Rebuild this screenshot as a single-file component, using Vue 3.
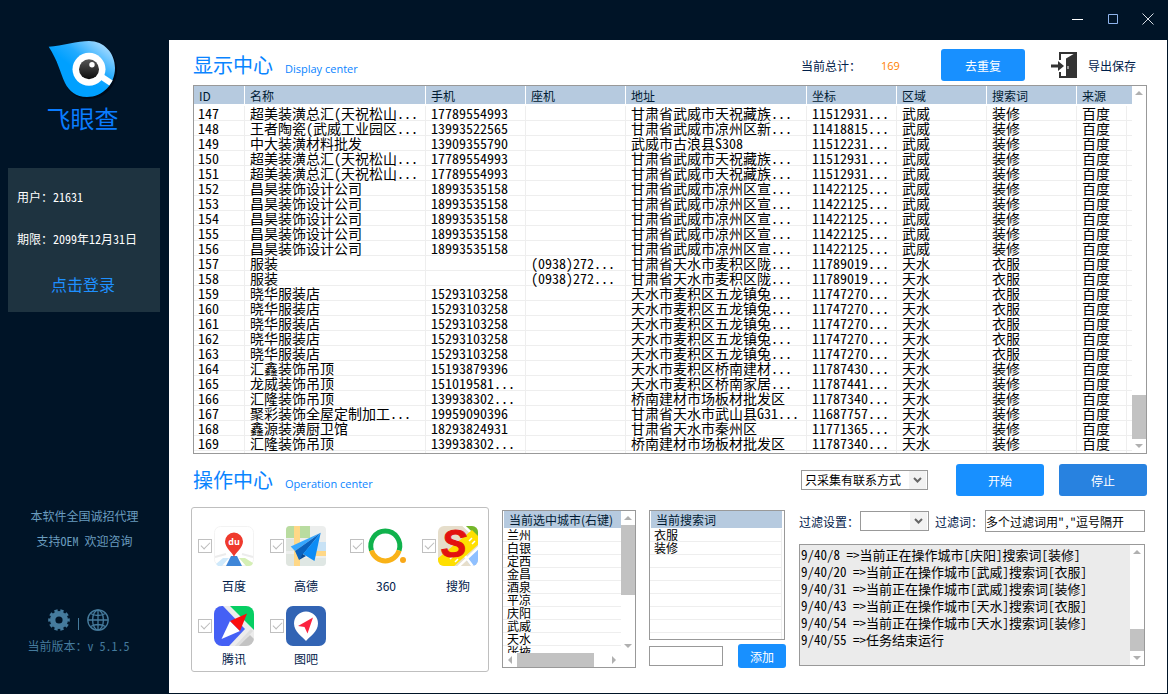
<template>
  <div class="app">
    <aside class="sidebar">
      <div class="brand">
        <svg class="brand-logo" viewBox="0 0 70 60" aria-hidden="true">
          <defs>
            <linearGradient id="drop" x1="0.45" y1="0.55" x2="0.9" y2="0.05">
              <stop offset="0" stop-color="#00a0ff" />
              <stop offset="0.35" stop-color="#22abff" />
              <stop offset="1" stop-color="#b5e0ff" />
            </linearGradient>
            <linearGradient id="pupil" x1="0" y1="0" x2="0" y2="1">
              <stop offset="0" stop-color="#555" />
              <stop offset="1" stop-color="#0c0c0c" />
            </linearGradient>
          </defs>
          <path d="M2 8C15 7 31 2 42 2C57 2 69 14 69 29C69 45 57 58 40 58C29 58 22 52 18 44C13 33 11 22 2 8Z" fill="#000a18" />
          <path d="M.7 5.7C14 5 30 0 41 0C56 0 67 12 67 27C67 43 55 56 39 56C28 56 21 50 17 42C12 31 10 20 .7 5.7Z" fill="url(#drop)" />
          <path d="M51 34L63 42" stroke="#fff" stroke-width="6" />
          <circle cx="41" cy="28.300" r="16.500" fill="#fff" />
          <circle cx="41" cy="28.300" r="10" fill="url(#pupil)" />
          <circle cx="44" cy="23.700" r="2.700" fill="#fff" />
        </svg>
        <h1>飞眼查</h1>
      </div>

      <div class="user-panel">
        <p>用户：{{ user.id }}</p>
        <p>期限：{{ user.expires }}</p>
        <button type="button" class="login">点击登录</button>
      </div>

      <div class="sidebar-foot">
        <p class="notice">本软件全国诚招代理</p>
        <p class="notice">支持OEM 欢迎咨询</p>
        <div class="foot-icons">
          <button type="button" aria-label="设置">
            <svg width="22" height="22" viewBox="0 0 22 22">
              <circle cx="11" cy="11" r="6.300" fill="none" stroke="#457b9d" stroke-width="5.400" />
              <circle cx="11" cy="11" r="9.500" fill="none" stroke="#457b9d" stroke-width="2.600" pathLength="20" stroke-dasharray="1.1 0.9" stroke-dashoffset="0.55" />
            </svg>
          </button>
          <span class="divider"></span>
          <button type="button" aria-label="官网">
            <svg width="22" height="22" viewBox="0 0 22 22" fill="none" stroke="#457b9d" stroke-width="1.300">
              <circle cx="11" cy="11" r="10.200" />
              <ellipse cx="11" cy="11" rx="5.400" ry="10" />
              <path d="M11 1V21M1 11H21M3.500 4.500Q11 8.500 18.500 4.500M3.500 17.500Q11 13.500 18.500 17.500" />
            </svg>
          </button>
        </div>
        <p class="version">当前版本：v 5.1.5</p>
      </div>
    </aside>

    <div class="titlebar">
      <button type="button" aria-label="最小化">
        <svg width="12" height="12" viewBox="0 0 12 12"><path d="M0 6.500H11" stroke="#fff" /></svg>
      </button>
      <button type="button" aria-label="最大化">
        <svg width="12" height="12" viewBox="0 0 12 12"><path d="M1.500 1.500H10.500V10.500H1.500Z" fill="none" stroke="#8fb4ec" /></svg>
      </button>
      <button type="button" aria-label="关闭">
        <svg width="12" height="12" viewBox="0 0 12 12"><path d="M.5 .5L11.500 11.500M11.500 .5L.5 11.500" stroke="#d5dbe2" /></svg>
      </button>
    </div>

    <main class="main">
      <section>
        <header class="section-head">
          <h2>显示中心</h2>
          <span class="subtitle">Display center</span>
          <div class="head-tools">
            <span class="total-label">当前总计：</span>
            <span class="total">{{ total }}</span>
            <button type="button" class="btn btn-dedupe">去重复</button>
            <button type="button" class="export">
              <svg width="26" height="26" viewBox="0 0 26 26" aria-hidden="true">
                <path d="M9 8V1H25V25H9V20" fill="none" stroke="#333" stroke-width="2" />
                <path d="M15 6.500L26 0V26H15Z" fill="#333" />
                <path d="M0 14H10" stroke="#333" stroke-width="3" />
                <path d="M7 9L13 14L7 19Z" fill="#333" />
                <path d="M17 14V17" stroke="#fff" />
              </svg>
              导出保存
            </button>
          </div>
        </header>

        <div class="data-box">
          <table class="data-table">
            <colgroup>
              <col class="c-id" /><col class="c-name" /><col class="c-tel" /><col class="c-tel" /><col class="c-name" />
              <col class="c-mid" /><col class="c-mid" /><col class="c-mid" /><col class="c-src" /><col class="c-end" />
            </colgroup>
            <thead>
              <tr>
                <th v-for="(h, i) in headers" :key="h" :colspan="i === 8 ? 2 : 1">{{ h }}</th>
              </tr>
            </thead>
            <tbody>
              <tr v-for="r in rows" :key="r[0]">
                <td v-for="(cell, i) in r" :key="i">{{ cell }}</td>
                <td></td>
              </tr>
              <tr class="tail"><td v-for="n in 10" :key="n"></td></tr>
            </tbody>
          </table>
          <div class="scroll">
            <span class="arrow up"></span>
            <div class="track end"><div class="thumb thumb-data"></div></div>
            <span class="arrow down"></span>
          </div>
        </div>
      </section>

      <section>
        <header class="section-head ops-head">
          <h2>操作中心</h2>
          <span class="subtitle">Operation center</span>
          <div class="run-tools">
            <div class="select-box mode">
              <select v-model="mode" aria-label="采集方式">
                <option>只采集有联系方式</option>
                <option>采集全部</option>
              </select>
              <svg class="chevron" viewBox="0 0 17 18"><path d="M5 7L8.500 10.500L12 7" /></svg>
            </div>
            <button type="button" class="btn btn-run">开始</button>
            <button type="button" class="btn btn-run btn-stop">停止</button>
          </div>
        </header>

        <div class="ops">
          <div class="sources">
            <label class="source">
              <input v-model="sources" type="checkbox" value="百度" />
              <svg viewBox="0 0 40 40" aria-hidden="true">
                <rect x="0.500" y="0.500" width="39" height="39" rx="6" fill="#fff" stroke="#f3f3f3" />
                <path d="M2 38L9 32H15L8 40H4Z" fill="#cfe9fb" />
                <path d="M25 32H31L39 37Q38 40 35 40H32Z" fill="#d5efb5" />
                <path d="M1 31L12 28M28 28L39 31" stroke="#ececec" stroke-width="2" />
                <path d="M12 40L17 30H23L28 40Z" fill="#3f86d8" />
                <path d="M20 31C19 27 11 22 11 15.500A9 9 0 0 1 29 15.500C29 22 21 27 20 31Z" fill="#ef3a2d" />
                <text x="20" y="19" text-anchor="middle" class="mark-du">du</text>
              </svg>
              <span>百度</span>
            </label>
            <label class="source">
              <input v-model="sources" type="checkbox" value="高德" />
              <svg viewBox="0 0 40 40" aria-hidden="true">
                <rect width="40" height="40" rx="4" fill="#eceeed" />
                <path d="M4 0H8V12H0V4Q0 0 4 0ZM16 0H24V12H14V0Z" fill="#b9dca0" />
                <path d="M8 0H14V40H8Z" fill="#ffd887" />
                <path d="M0 13H8V25H0ZM0 28H8V40H4Q0 40 0 36Z" fill="#dfe5df" />
                <path d="M27 25H40V30H27Z" fill="#ffd887" />
                <path d="M33 16H40V25H30Z" fill="#c8e2f5" />
                <path d="M14 32H40V36Q40 40 36 40H14Z" fill="#dfe7e4" />
                <path d="M34.700 6.700L4.700 20.500L9 25Z" fill="#36a7ff" />
                <path d="M34.700 6.700L9 25L13 34L17 28.500Z" fill="#0b62bd" />
                <path d="M34.700 6.700L17 28L28.500 35Z" fill="#0d8cf5" />
                <path d="M13 34L16.500 28L20 30Z" fill="#084a94" />
              </svg>
              <span>高德</span>
            </label>
            <label class="source">
              <input v-model="sources" type="checkbox" value="360" />
              <svg viewBox="0 0 40 40" aria-hidden="true">
                <path d="M5.500 24.500A14.500 15 0 1 1 33.100 24.500" fill="none" stroke="#10b24c" stroke-width="5" />
                <path d="M5.500 24.500A14.500 15 0 0 0 33.100 24.500" fill="none" stroke="#f9b218" stroke-width="5" />
                <circle cx="37" cy="34" r="3" fill="#f9a818" />
              </svg>
              <span>360</span>
            </label>
            <label class="source">
              <input v-model="sources" type="checkbox" value="搜狗" />
              <svg viewBox="0 0 40 40" aria-hidden="true">
                <defs><clipPath id="sg"><rect width="40" height="40" rx="6" /></clipPath></defs>
                <g clip-path="url(#sg)">
                  <rect width="40" height="40" fill="#e6decb" />
                  <path d="M26 0H40V15Z" fill="#74b72a" />
                  <path d="M40 23V40H33L27 32Z" fill="#8fc0ff" />
                  <path d="M24 -2L42 15M24 26L36 42M42 20L20 41" stroke="#fff" stroke-width="2.500" />
                  <path d="M-2 34L34 4L42 12V17L14 42H-2Z" fill="#ffdf00" />
                  <path d="M31 15L34 12M34 18L37 15M17 36L20 33M12 33L15 30" stroke="#fff" stroke-width="1.500" />
                </g>
                <text x="16" y="31" text-anchor="middle" class="mark-s">S</text>
              </svg>
              <span>搜狗</span>
            </label>
            <label class="source low">
              <input v-model="sources" type="checkbox" value="腾讯" />
              <svg viewBox="0 0 40 40" aria-hidden="true">
                <defs><clipPath id="tx"><rect width="40" height="40" rx="8" /></clipPath></defs>
                <g clip-path="url(#tx)">
                  <rect width="40" height="40" fill="#ececec" />
                  <path d="M0 0H9L31 23L15 40H0Z" fill="#4560f5" />
                  <path d="M16 0H40V24Z" fill="#06cf63" />
                  <path d="M36 29L40 33V40H24Z" fill="#c3c3c3" />
                  <path d="M38 24L21 42" stroke="#dedede" stroke-width="3" />
                </g>
                <path d="M16 15L7.500 33L26 25Z" fill="#fff" />
                <path d="M33 7.500L16 15L26 25Z" fill="#fb0d0d" />
              </svg>
              <span>腾讯</span>
            </label>
            <label class="source low">
              <input v-model="sources" type="checkbox" value="图吧" />
              <svg viewBox="0 0 40 40" aria-hidden="true">
                <rect width="40" height="40" rx="7" fill="#3264b4" />
                <path d="M20 35C17 31 8 26 8 17.500A12 12 0 0 1 32 17.500C32 26 23 31 20 35Z" fill="#fff" />
                <path d="M27 11.500L12 20L18.500 21L21.500 27.500Z" fill="#fb2340" />
              </svg>
              <span>图吧</span>
            </label>
          </div>

          <div class="list-box cities">
            <div class="list-main">
              <table class="list">
                <thead><tr><th>当前选中城市(右键)</th></tr></thead>
                <tbody><tr v-for="c in cities" :key="c"><td>{{ c }}</td></tr></tbody>
              </table>
              <div class="scroll">
                <span class="arrow up"></span>
                <div class="track"><div class="thumb thumb-city"></div></div>
                <span class="arrow down"></span>
              </div>
            </div>
            <div class="scroll-x">
              <span class="arrow left"></span>
              <div class="track-x"><div class="thumb-x"></div></div>
              <span class="arrow right"></span>
            </div>
          </div>

          <div class="words">
            <div class="list-box word-box">
              <table class="list word-list">
                <thead><tr><th>当前搜索词</th></tr></thead>
                <tbody><tr v-for="(w, i) in wordRows" :key="i"><td>{{ w }}</td></tr></tbody>
              </table>
            </div>
            <form class="add-row" @submit.prevent="addWord">
              <input v-model.trim="newWord" type="text" aria-label="搜索词" />
              <button type="submit" class="btn">添加</button>
            </form>
          </div>

          <div class="filter">
            <div class="filter-row">
              <label for="filterMode">过滤设置：</label>
              <div class="select-box filter-mode">
                <select id="filterMode" v-model="filterMode">
                  <option value=""></option>
                  <option>包含</option>
                  <option>不包含</option>
                </select>
                <svg class="chevron" viewBox="0 0 17 18"><path d="M5 7L8.500 10.500L12 7" /></svg>
              </div>
              <label for="filterWords">过滤词：</label>
              <input id="filterWords" v-model="filterWords" type="text" />
            </div>
            <div class="log-box">
              <textarea :value="log.join('\n')" readonly aria-label="运行日志"></textarea>
              <div class="scroll">
                <span class="arrow up"></span>
                <div class="track end"><div class="thumb thumb-log"></div></div>
                <span class="arrow down"></span>
              </div>
            </div>
          </div>
        </div>
      </section>
    </main>
  </div>
</template>

<script setup>
import { ref, computed } from 'vue'

const user = { id: '21631', expires: '2099年12月31日' }
const total = ref(169)

const headers = ['ID', '名称', '手机', '座机', '地址', '坐标', '区域', '搜索词', '来源']

const LZ = '甘肃省武威市凉州区宣...'
const TZ = '甘肃省武威市天祝藏族...'
const WL = '天水市麦积区五龙镇兔...'

const rows = ref([
  ['147', '超美装潢总汇(天祝松山...', '17789554993', '', TZ, '11512931...', '武威', '装修', '百度'],
  ['148', '王者陶瓷(武威工业园区...', '13993522565', '', '甘肃省武威市凉州区新...', '11418815...', '武威', '装修', '百度'],
  ['149', '中大装潢材料批发', '13909355790', '', '武威市古浪县S308', '11512231...', '武威', '装修', '百度'],
  ['150', '超美装潢总汇(天祝松山...', '17789554993', '', TZ, '11512931...', '武威', '装修', '百度'],
  ['151', '超美装潢总汇(天祝松山...', '17789554993', '', TZ, '11512931...', '武威', '装修', '百度'],
  ['152', '昌昊装饰设计公司', '18993535158', '', LZ, '11422125...', '武威', '装修', '百度'],
  ['153', '昌昊装饰设计公司', '18993535158', '', LZ, '11422125...', '武威', '装修', '百度'],
  ['154', '昌昊装饰设计公司', '18993535158', '', LZ, '11422125...', '武威', '装修', '百度'],
  ['155', '昌昊装饰设计公司', '18993535158', '', LZ, '11422125...', '武威', '装修', '百度'],
  ['156', '昌昊装饰设计公司', '18993535158', '', LZ, '11422125...', '武威', '装修', '百度'],
  ['157', '服装', '', '(0938)272...', '甘肃省天水市麦积区陇...', '11789019...', '天水', '衣服', '百度'],
  ['158', '服装', '', '(0938)272...', '甘肃省天水市麦积区陇...', '11789019...', '天水', '衣服', '百度'],
  ['159', '晓华服装店', '15293103258', '', WL, '11747270...', '天水', '衣服', '百度'],
  ['160', '晓华服装店', '15293103258', '', WL, '11747270...', '天水', '衣服', '百度'],
  ['161', '晓华服装店', '15293103258', '', WL, '11747270...', '天水', '衣服', '百度'],
  ['162', '晓华服装店', '15293103258', '', WL, '11747270...', '天水', '衣服', '百度'],
  ['163', '晓华服装店', '15293103258', '', WL, '11747270...', '天水', '衣服', '百度'],
  ['164', '汇鑫装饰吊顶', '15193879396', '', '天水市麦积区桥南建材...', '11787430...', '天水', '装修', '百度'],
  ['165', '龙威装饰吊顶', '151019581...', '', '天水市麦积区桥南家居...', '11787441...', '天水', '装修', '百度'],
  ['166', '汇隆装饰吊顶', '139938302...', '', '桥南建材市场板材批发区', '11787340...', '天水', '装修', '百度'],
  ['167', '聚彩装饰全屋定制加工...', '19959090396', '', '甘肃省天水市武山县G31...', '11687757...', '天水', '装修', '百度'],
  ['168', '鑫源装潢厨卫馆', '18293824931', '', '甘肃省天水市秦州区', '11771365...', '天水', '装修', '百度'],
  ['169', '汇隆装饰吊顶', '139938302...', '', '桥南建材市场板材批发区', '11787340...', '天水', '装修', '百度'],
])

const mode = ref('只采集有联系方式')
const sources = ref(['百度', '高德', '360', '搜狗', '腾讯', '图吧'])
const cities = ['兰州', '白银', '定西', '金昌', '酒泉', '平凉', '庆阳', '武威', '天水', '张掖']

const words = ref(['衣服', '装修'])
const newWord = ref('')
// pad with empty rows so the grid lines fill the box
const wordRows = computed(() => [...words.value, ...Array(Math.max(0, 9 - words.value.length)).fill('')])

const filterMode = ref('')
const filterWords = ref('多个过滤词用","逗号隔开')

const log = ref([
  '9/40/8 =>当前正在操作城市[庆阳]搜索词[装修]',
  '9/40/20 =>当前正在操作城市[武威]搜索词[衣服]',
  '9/40/31 =>当前正在操作城市[武威]搜索词[装修]',
  '9/40/43 =>当前正在操作城市[天水]搜索词[衣服]',
  '9/40/54 =>当前正在操作城市[天水]搜索词[装修]',
  '9/40/55 =>任务结束运行',
])

function addWord() {
  if (!newWord.value) return
  words.value.push(newWord.value)
  newWord.value = ''
}
</script>

<style>
body { margin: 0; background: #001427; }
</style>

<style scoped>
* { box-sizing: border-box; }

.app {
  display: grid;
  grid-template-columns: 169px 1fr;
  grid-template-rows: 40px 1fr;
  min-height: 100vh;
  padding: 0 1px 1px 0;
  background: #001427;
  font-family: 'Noto Sans CJK SC', sans-serif;
  font-size: 12px;
  color: #00204a;
}

h1, h2, p { margin: 0; font-weight: 400; }

button, input, select, textarea { font: inherit; color: inherit; margin: 0; }
button { border: none; background: none; padding: 0; cursor: pointer; }

/* sidebar */
.sidebar {
  grid-row: 1 / 3;
  display: flex;
  flex-direction: column;
  padding: 41px 8px 38px;
}

.brand { display: flex; flex-direction: column; align-items: center; padding-right: 4px; }
.brand-logo { width: 70px; height: 60px; }
.brand h1 { font-size: 24px; line-height: 34px; color: #0a7cff; }

.user-panel {
  display: flex;
  flex-direction: column;
  height: 144px;
  margin: 33px 1px 0 0;
  padding: 20px 9px;
  background: #1e3340;
  color: #fff;
  font-feature-settings: 'hwid';
}
.user-panel p { line-height: 18px; margin-bottom: 24px; }
.login { padding-right: 2px; font-size: 16px; line-height: 24px; color: #1e90ff; }

.sidebar-foot {
  display: flex;
  flex-direction: column;
  align-items: center;
  margin-top: auto;
  font-feature-settings: 'hwid';
}
.notice { line-height: 25px; color: #6a9cbf; }
.foot-icons { display: flex; align-items: center; gap: 8px; margin-top: 56px; padding-right: 12px; }
.foot-icons button, .foot-icons svg { display: block; }
.divider { width: 1px; height: 12px; margin-top: 8px; background: #457b9d; }
.version { line-height: 18px; margin-top: 6px; padding-right: 12px; color: #457b9d; }

/* title bar */
.titlebar { display: flex; justify-content: flex-end; padding-right: 2px; }
.titlebar button { width: 35px; height: 38px; }
.titlebar svg { display: block; margin: 0 auto; }

/* main */
.main { background: #fff; padding: 9px 20px 21px 22px; min-width: 0; }

.section-head { display: flex; align-items: center; height: 32px; padding-left: 2px; }
.section-head h2 { font-size: 20px; line-height: 28px; color: #0a84ff; }
.subtitle { margin: 6px 0 0 12px; font-family: 'Open Sans', sans-serif; font-size: 11px; color: #0a84ff; }
.ops-head { margin-top: 10px; }

.head-tools, .run-tools { display: flex; align-items: center; margin-left: auto; }
.head-tools { padding-right: 11px; }
.total-label { width: 80px; }
.total { width: 60px; color: #ff7f00; font-family: 'Open Sans', sans-serif; font-size: 11px; }

.btn { height: 32px; border-radius: 3px; background: #1890ff; color: #fff; }
.btn-dedupe { width: 84px; margin-right: 26px; }
.export { display: flex; align-items: center; gap: 11px; }

.data-box {
  display: flex;
  margin: 4px 0 0 2px;
  border: 1px solid #999;
}
.data-table {
  flex: 1;
  width: 100%;
  min-width: 0;
  table-layout: fixed;
  border-collapse: separate;
  border-spacing: 0;
  font-size: 14px;
  color: #000;
  font-feature-settings: 'hwid';
}
.c-id { width: 51px; }
.c-name { width: 181px; }
.c-tel { width: 100px; }
.c-mid { width: 90px; }
.c-src { width: 50px; }
.c-end { width: 5px; }

.data-table th {
  height: 20px;
  padding: 0 5px;
  border-right: 1px solid #fff;
  border-bottom: 2px solid #fff;
  background: #b6cadf;
  color: #001a33;
  font-size: 12px;
  font-weight: 400;
  line-height: 17px;
  text-align: left;
  font-feature-settings: normal;
}
.data-table th:last-child { border-right: none; }
.data-table td {
  height: 15px;
  padding: 0 0 0 5px;
  border-right: 1px solid #eee;
  border-bottom: 1px solid #eee;
  line-height: 14px;
  white-space: nowrap;
}
.data-table td:last-child { padding: 0; border-right: none; }
.data-table td:first-child { padding-left: 4px; }
.data-table .tail td { height: 2px; border-bottom: none; }

/* scroll bars */
.scroll { display: flex; flex-direction: column; width: 14px; flex: none; background: #fff; }
.track { flex: 1; display: flex; flex-direction: column; }
.track.end { justify-content: flex-end; }
.thumb, .thumb-x { background: #c2c2c2; }
.thumb-data { height: 44px; }
.thumb-city { height: 70px; }
.thumb-log { height: 22px; }
.arrow { display: flex; align-items: center; justify-content: center; width: 14px; height: 14px; flex: none; }
.arrow::before { content: ''; border: 4px solid transparent; }
.arrow.up::before { border-top: none; border-bottom-color: #b0b0b0; }
.arrow.down::before { border-bottom: none; border-top-color: #b0b0b0; }
.arrow.left::before { border-left: none; border-right-color: #b0b0b0; }
.arrow.right::before { border-right: none; border-left-color: #b0b0b0; }
.scroll-x { display: flex; height: 14px; padding-right: 14px; background: #fff; }
.track-x { flex: 1; }
.thumb-x { width: 86%; height: 14px; }

/* selects and buttons above the panels */
.select-box { position: relative; height: 20px; border: 1px solid #999; background: #fff; }
.select-box select {
  display: block;
  width: 100%;
  height: 18px;
  padding: 0 18px 0 3px;
  border: none;
  border-radius: 0;
  background: none;
  appearance: none;
  line-height: 18px;
  color: #000;
}
.chevron {
  position: absolute;
  top: 0;
  right: 1px;
  width: 17px;
  height: 18px;
  background: #f2f2f2;
  pointer-events: none;
}
.chevron path { fill: none; stroke: #666; stroke-width: 2; }
.mode { width: 127px; margin-right: 28px; }
.btn-run { width: 88px; }
.btn-stop { margin-left: 15px; background: #2882e0; }

/* operation panels */
.ops {
  display: grid;
  grid-template-columns: minmax(0, 298fr) minmax(0, 134fr) minmax(0, 137fr) minmax(0, 346fr);
  gap: 13px;
  align-items: start;
  margin: 11px 2px 0 0;
}

.sources {
  display: grid;
  grid-template-columns: 72px 80px 72px 1fr;
  grid-template-rows: 80px 1fr;
  height: 165px;
  padding: 18px 0 0 6px;
  border: 1px solid #bfbfbf;
  border-radius: 3px;
}
.source {
  display: grid;
  grid-template-columns: 14px 40px;
  grid-template-rows: 40px 18px;
  column-gap: 2px;
  row-gap: 11px;
  align-content: start;
  align-items: center;
  text-align: center;
}
.source.low { row-gap: 4px; }
.source svg { display: block; width: 40px; height: 40px; }
.source span { grid-column: 2; line-height: 18px; }
.source input {
  position: relative;
  width: 14px;
  height: 14px;
  border: 1px solid #c0c0c0;
  background: #fff;
  appearance: none;
}
.source input:checked::after {
  content: '';
  position: absolute;
  left: 2px;
  top: 2px;
  width: 8px;
  height: 4px;
  border-left: 1px solid #bbb;
  border-bottom: 1px solid #bbb;
  transform: rotate(-45deg);
}
.mark-du { font: bold 9px 'Open Sans', sans-serif; fill: #fff; }
.mark-s { font: italic bold 38px 'Liberation Sans', sans-serif; fill: #e3120f; stroke: #e3120f; stroke-width: 1; }

.list-box { margin-top: 3px; border: 1px solid #999; overflow: hidden; }
.cities { height: 158px; }
.list-main { display: flex; height: 142px; overflow: hidden; }
.list-main .list { flex: 1; min-width: 0; align-self: flex-start; }
.list { width: 100%; border-collapse: separate; border-spacing: 0; table-layout: fixed; color: #000; }
.list th {
  height: 18px;
  padding: 0 0 0 5px;
  border-left: 1px solid #fff;
  border-bottom: 1px solid #fff;
  background: #b6cadf;
  color: #001a33;
  font-weight: 400;
  line-height: 16px;
  text-align: left;
  white-space: nowrap;
}
.list td { height: 13px; padding: 0 0 0 4px; border-bottom: 1px solid #eee; line-height: 12px; white-space: nowrap; }

.word-box { height: 130px; padding-right: 2px; margin-right: 1px; }
.word-list td { border-right: 1px solid #eee; }
.add-row { display: flex; align-items: center; justify-content: space-between; gap: 15px; margin-top: 4px; }
.add-row input { flex: 1; min-width: 0; height: 20px; padding: 0 2px; border: 1px solid #999; }
.add-row .btn { width: 48px; height: 24px; }

.filter { display: flex; flex-direction: column; gap: 12px; margin-top: 3px; }
.filter-row { display: flex; align-items: center; height: 22px; }
.filter-row label { flex: none; width: 61px; white-space: nowrap; }
.filter-mode { flex: none; width: 69px; margin-right: 6px; }
.filter-row .filter-mode + label { width: 50px; }
.filter-row input {
  flex: 1;
  min-width: 0;
  height: 22px;
  padding: 0;
  border: 1px solid #999;
  color: #000;
  font-feature-settings: 'hwid';
}

.log-box { display: flex; height: 122px; border: 1px solid #999; background: #ebebeb; }
.log-box textarea {
  flex: 1;
  min-width: 0;
  padding: 1px;
  border: none;
  outline: none;
  resize: none;
  overflow: hidden;
  background: none;
  color: #000;
  font-size: 13px;
  line-height: 17px;
  font-feature-settings: 'hwid';
}
</style>
